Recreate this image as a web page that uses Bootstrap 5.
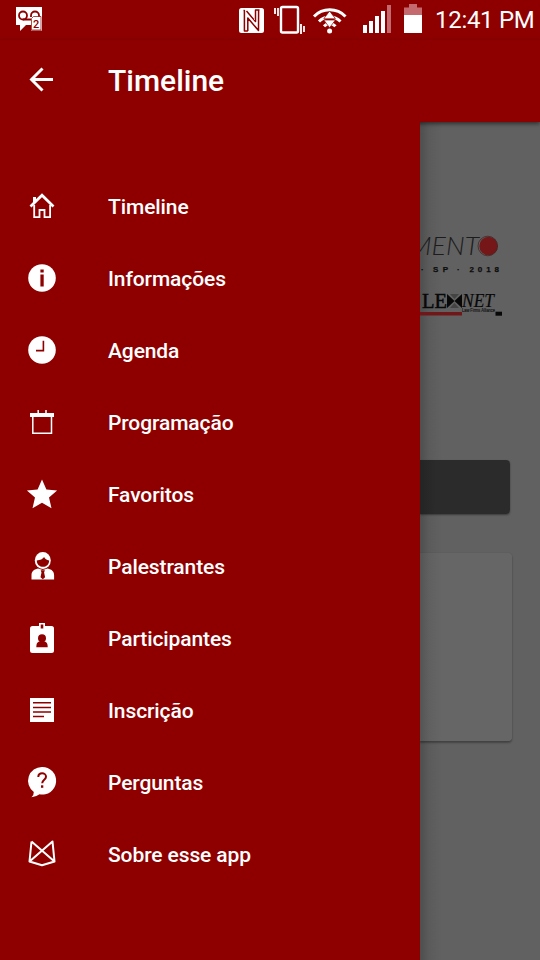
<!DOCTYPE html>
<html lang="pt-BR">
<head>
<meta charset="utf-8">
<meta name="viewport" content="width=device-width, initial-scale=1">
<title>Timeline</title>
<link href="https://cdn.jsdelivr.net/npm/bootstrap@5.3.0/dist/css/bootstrap.min.css" rel="stylesheet">
<style>
:root { --app-red: #8e0000; }
body { font-family: Roboto, sans-serif; height: 960px; background: #616161; color: #fff; }
svg { display: block; flex: none; }
.status-bar { height: 40px; background: var(--app-red); padding: 0 5px 0 15px; }
.status-time { font-size: 24px; line-height: 40px; width: 100px; letter-spacing: -.3px; white-space: nowrap; }
.app-bar { height: 82px; background: var(--app-red); padding: 0 24px 2px; gap: 48px; box-shadow: 0 2px 4px rgba(0,0,0,.5); z-index: 1; }
.app-title { font-size: 30px; line-height: 36px; font-weight: 500; padding-top: 2px; }
.drawer { width: 420px; background: var(--app-red); padding-top: 48px; z-index: 2; }
.drawer-item { height: 72px; padding: 0 24px; gap: 48px; font-size: 21px; font-weight: 500; letter-spacing: -.1px; color: #fff; text-decoration: none; }
.drawer-item span { padding-top: 4px; }
.page-side { background: linear-gradient(90deg, #4e4e4e, #5b5b5b 9px, #616161 22px); padding-top: 108px; }
.dark-button { width: 90px; height: 54px; margin-top: 138px; background: linear-gradient(90deg, #242424, #2b2b2b 16px); border-radius: 0 4px 4px 0; box-shadow: 0 1px 2px rgba(0,0,0,.4); }
.post-card { width: 92px; height: 188px; margin-top: 39px; background: linear-gradient(90deg, #545454, #606060 9px, #666 22px); border-radius: 0 4px 4px 0; box-shadow: 0 2px 2px rgba(0,0,0,.3), 0 0 1px rgba(0,0,0,.3); }
</style>
</head>
<body class="d-flex flex-column overflow-hidden">
<header class="status-bar d-flex align-items-center justify-content-between">
  <svg width="30" height="40" viewBox="15 0 30 40">
    <path d="M16 7h26v23.500H31V25h-5l-6 6v-6h-4z" fill="#fff"/>
    <g fill="none" stroke="#8e0000" stroke-width="1.800"><circle cx="23" cy="15.500" r="4"/><path d="M23 19.500h8M31 17v-1.500a4 4 0 0 1 8 0V17"/></g>
    <path d="M31.500 18.500l2-2H41V30H31.500z" fill="#fff" stroke="#8e0000" stroke-width=".7"/>
    <text x="33" y="28.300" font-family="Roboto" font-weight="500" font-size="11" fill="#8e0000">2</text>
  </svg>
  <div class="d-flex align-items-center">
    <svg width="200" height="40" viewBox="235 0 200 40" fill="#fff">
      <rect x="239" y="8" width="25" height="25" rx="2.500"/>
      <path d="M243.500 10.500l.9 0V31h3.500M259.500 10h-4v11.500l-9-10.500M247.800 31V18l10.700 12.500.1-20.500" fill="none" stroke="#8e0000" stroke-width="1.500" stroke-linejoin="round"/>
      <rect x="281" y="7" width="17" height="25.500" rx="1.500" fill="none" stroke="#fff" stroke-width="2.400"/>
      <path d="M275 8v6M278 8v8M301 24v10M304 26v6" stroke="#fff" stroke-width="1.800"/>
      <g fill="none" stroke="#fff" stroke-width="3"><path d="M314 16.500a22 22 0 0 1 31.500 0M319 21.500a15 15 0 0 1 21.500 0M324 26.300a8 8 0 0 1 11.500 0"/></g>
      <circle cx="329.600" cy="31" r="2.500"/>
      <path d="M329.600 11l5.800 7.700h-11.600zM323.800 20h11.600l-5.800 7.700z" stroke="#8e0000" stroke-width=".7"/>
      <path d="M363 25h4v8h-4zM369 21h4v12h-4zM375 16h4v17h-4zM381 11h4v22h-4z"/>
      <path d="M387 5h4v28h-4zM404 7.500h5V4h8v3.500h5V16h-18z" fill="#c46a6e"/>
      <path d="M404 15h18v18h-18z"/>
    </svg>
    <div class="status-time">12:41 PM</div>
  </div>
</header>
<nav class="app-bar d-flex align-items-center">
  <svg width="36" height="36" viewBox="0 0 36 36" fill="none" stroke="#fff" stroke-width="2.900"><path d="M29 17.500H7.500M18.500 6.500l-11 11 11 11"/></svg>
  <h1 class="app-title m-0">Timeline</h1>
</nav>
<main class="d-flex flex-grow-1">
  <div class="drawer flex-shrink-0 d-flex flex-column">
    <a class="drawer-item d-flex align-items-center" href="#">
      <svg width="36" height="36" viewBox="0 0 36 36" fill="none" stroke="#fff" stroke-width="1.800"><path d="M6.500 18.500L18 7.200l11.500 11.300" stroke-width="2.700"/><path d="M10.200 17v12.200h5.300V22h5v7.200h5.600V17"/><path d="M10.500 9v6" stroke-width="3"/></svg>
      <span>Timeline</span>
    </a>
    <a class="drawer-item d-flex align-items-center" href="#">
      <svg width="36" height="36" viewBox="0 0 36 36"><circle cx="18" cy="18" r="13.800" fill="#fff"/><path d="M16.400 9.500h3.300v3h-3.300zM16.400 14.500h3.300v12h-3.300z" fill="#8e0000"/></svg>
      <span>Informações</span>
    </a>
    <a class="drawer-item d-flex align-items-center" href="#">
      <svg width="36" height="36" viewBox="0 0 36 36"><circle cx="18" cy="18" r="13.800" fill="#fff"/><path d="M19.400 8.800v9.800H12" fill="none" stroke="#8e0000" stroke-width="1.600"/></svg>
      <span>Agenda</span>
    </a>
    <a class="drawer-item d-flex align-items-center" href="#">
      <svg width="36" height="36" viewBox="0 0 36 36" fill="none" stroke="#fff" stroke-width="1.500"><path d="M6 9h24v4H6z" fill="#fff" stroke="none"/><path d="M8.800 12v17.300h18.700V12M14.200 6v4M22 6v4"/></svg>
      <span>Programação</span>
    </a>
    <a class="drawer-item d-flex align-items-center" href="#">
      <svg width="36" height="36" viewBox="0 0 36 36"><path d="M18 3.600l4.400 9.900 10.700 1-8.100 7.100 2.500 10.600L18 26.700l-9.500 5.500L11 21.600l-8.100-7.100 10.700-1z" fill="#fff"/></svg>
      <span>Favoritos</span>
    </a>
    <a class="drawer-item d-flex align-items-center" href="#">
      <svg width="36" height="36" viewBox="0 0 36 36"><ellipse cx="18.800" cy="12.500" rx="8" ry="8.500" fill="#fff"/><path d="M12.800 12.500c3.500-.3 6-1.500 7.300-3.500.8 1.800 2.500 3 5 3.500 0 4-2.700 6.300-6.100 6.300s-6.200-2.300-6.200-6.300z" fill="#8e0000"/><path d="M7.500 31.500v-4c0-4 2-6 6.500-7l4.800 1.500 4.800-1.500c4.500 1 6.500 3 6.500 7v4z" fill="#fff"/><path d="M16.700 22.300h4.200l-.8 2.200 1 4.700-2.300 2-2.300-2 1-4.700z" fill="#8e0000"/></svg>
      <span>Palestrantes</span>
    </a>
    <a class="drawer-item d-flex align-items-center" href="#">
      <svg width="36" height="36" viewBox="0 0 36 36"><rect x="6" y="6" width="24" height="27" rx="2.500" fill="#fff"/><path d="M15 3h6v6h-6z" fill="#fff"/><g fill="#8e0000"><path d="M16.700 4.500h2.600v4h-2.600z"/><circle cx="18" cy="18.300" r="4"/><path d="M12.300 27.300c0-4.500 1.500-5.500 4-6h3.400c2.500.5 4 1.500 4 6z"/></g></svg>
      <span>Participantes</span>
    </a>
    <a class="drawer-item d-flex align-items-center" href="#">
      <svg width="36" height="36" viewBox="0 0 36 36"><path d="M6 6h24v24H6z" fill="#fff"/><path d="M9 10.700h18M9 15.400h18M9 20h18M9 24.500h11" stroke="#8e0000" stroke-width="1.500"/></svg>
      <span>Inscrição</span>
    </a>
    <a class="drawer-item d-flex align-items-center" href="#">
      <svg width="36" height="36" viewBox="0 0 36 36"><path d="M18 3a13.800 13.800 0 1 1-2.500 27.300Q12 33 7.500 33.200q2.500-2.400 2.300-5.200A13.800 13.800 0 0 1 18 3z" fill="#fff"/><path d="M14.300 13c.1-5 7.700-4.700 7.700-.3 0 3-3.800 3-3.800 6.500" fill="none" stroke="#8e0000" stroke-width="2"/><path d="M17 21.300h2.300v2.500H17z" fill="#8e0000"/></svg>
      <span>Perguntas</span>
    </a>
    <a class="drawer-item d-flex align-items-center" href="#">
      <svg width="36" height="36" viewBox="0 0 36 36" fill="none" stroke="#fff" stroke-width="2" stroke-linejoin="round"><path d="M7.500 5.500L30.500 25.500 18 29.300 5.500 25.500 28.500 5.500l2 20M7.500 5.500l-2 20"/></svg>
      <span>Sobre esse app</span>
    </a>
  </div>
  <section class="page-side flex-grow-1">
    <svg width="100" height="92" viewBox="420 230 100 92">
      <text x="409" y="255.300" font-family="Lato" font-style="italic" font-weight="300" font-size="26" fill="#1c1c1c" textLength="70" lengthAdjust="spacingAndGlyphs">MENT</text>
      <circle cx="488.500" cy="246" r="9.200" fill="#751719"/>
      <ellipse cx="487.800" cy="246" rx="9.800" ry="9.800" fill="none" stroke="#3a2222" stroke-width=".7"/>
      <g font-family="Liberation Sans" font-weight="700" font-size="8" fill="#0c0c0c" stroke="#0c0c0c" stroke-width=".25">
        <text x="421" y="272">·</text><text x="433" y="272" textLength="15">SP</text><text x="457" y="272">·</text><text x="469.500" y="272" textLength="29.500">2018</text>
      </g>
      <text x="422" y="308" font-family="Liberation Serif" font-size="21.500" fill="#080808" stroke="#080808" stroke-width=".5" textLength="25" lengthAdjust="spacingAndGlyphs">LE</text>
      <path d="M447 294l7.500 7-7.500 7zM462 294l-7.500 7 7.500 7z" fill="#080808"/><path d="M450 294h9l-4.500 5zM450 308h9l-4.500-5z" fill="#444"/>
      <text x="462" y="307" font-family="Liberation Serif" font-style="italic" font-size="18" fill="#080808" stroke="#080808" stroke-width=".2" textLength="32" lengthAdjust="spacingAndGlyphs">NET</text>
      <path d="M420 312h42v3.500h-42z" fill="#701719"/>
      <path d="M495.500 311.700h6.500v4h-6.500z" fill="#080808"/>
      <text x="462" y="312.300" font-family="Liberation Sans" font-size="5" fill="#111" stroke="#111" stroke-width=".15" textLength="33" lengthAdjust="spacingAndGlyphs">Law Firms Alliance</text>
    </svg>
    <div class="dark-button"></div>
    <div class="post-card"></div>
  </section>
</main>
<script src="https://cdn.jsdelivr.net/npm/bootstrap@5.3.0/dist/js/bootstrap.bundle.min.js"></script>
</body>
</html>
